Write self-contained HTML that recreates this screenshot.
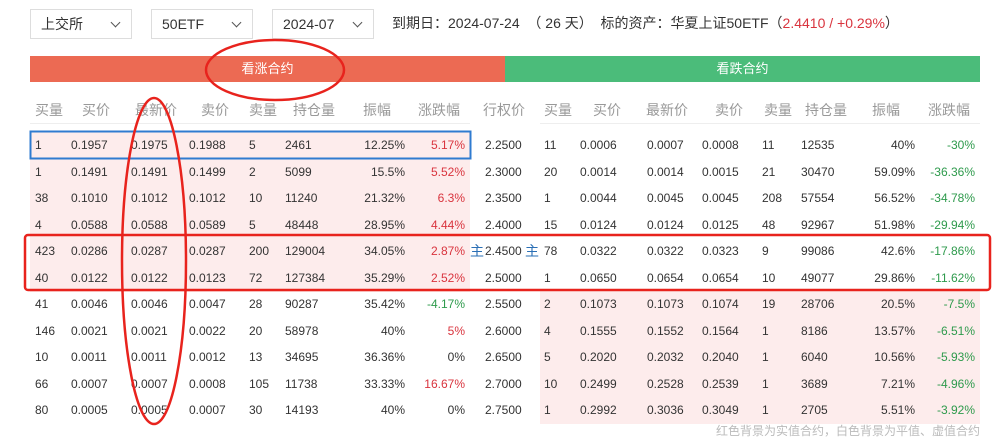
<!DOCTYPE html>
<html><head><meta charset="utf-8"><style>
*{margin:0;padding:0;box-sizing:border-box}
body{width:996px;height:443px;background:#fff;font-family:"Liberation Sans","Noto Sans CJK SC",sans-serif;font-size:12px;color:#333;position:relative;overflow:hidden}
.sel{position:absolute;top:9px;height:30px;border:1px solid #ddd;font-size:14px;line-height:28px;padding-left:10px;color:#333}
.sel:after{content:"";position:absolute;right:12px;top:9px;width:6px;height:6px;border-right:1px solid #555;border-bottom:1px solid #555;transform:rotate(45deg)}
.info{position:absolute;top:9px;left:392px;line-height:28px;font-size:14px;color:#333;white-space:nowrap}
.red{color:#d9343e}.grn{color:#2e9a4c}
.bar{position:absolute;top:56px;height:26px;color:#fff;font-size:13px;text-align:center;line-height:26px}
.hd{position:absolute;top:98px;height:24px;line-height:24px;color:#999;font-size:14px}
.r{position:absolute;left:0;width:996px;height:26px;line-height:26px}
.r span{position:absolute;top:0;white-space:nowrap}
.pl{position:absolute;left:30px;width:440px;top:0;height:27px;background:#fdecec}
.pr{position:absolute;left:540px;width:440px;top:0;height:27px;background:#fdecec}
.a{text-align:right}
</style></head><body>
<div class="sel" style="left:30px;width:102px">上交所</div>
<div class="sel" style="left:151px;width:102px">50ETF</div>
<div class="sel" style="left:272px;width:102px">2024-07</div>
<div class="info">到期日：2024-07-24 &nbsp;（ 26 天） &nbsp;标的资产：华夏上证50ETF（<span class="red">2.4410 / +0.29%</span>）</div>
<div class="bar" style="left:30px;width:475px;background:#ec6a53">看涨合约</div>
<div class="bar" style="left:505px;width:475px;background:#4bbc7a">看跌合约</div>
<div class="hd" style="left:35px">买量</div><div class="hd" style="left:82px">买价</div><div class="hd" style="left:135px">最新价</div><div class="hd" style="left:201px">卖价</div><div class="hd" style="left:249px">卖量</div><div class="hd" style="left:293px">持仓量</div><div class="hd" style="left:363px">振幅</div><div class="hd" style="left:418px">涨跌幅</div>
<div class="hd" style="left:483px">行权价</div><div class="hd" style="left:544px">买量</div><div class="hd" style="left:593px">买价</div><div class="hd" style="left:646px">最新价</div><div class="hd" style="left:715px">卖价</div><div class="hd" style="left:764px">卖量</div><div class="hd" style="left:805px">持仓量</div><div class="hd" style="left:872px">振幅</div><div class="hd" style="left:928px">涨跌幅</div>
<div style="position:absolute;left:30px;top:123px;width:440px;height:1px;background:#eee"></div>
<div style="position:absolute;left:540px;top:123px;width:440px;height:1px;background:#eee"></div>
<div id="rows"></div>
<script>
var d=[
[1,'0.1957','0.1975','0.1988',5,2461,'12.25%','5.17%','2.2500',11,'0.0006','0.0007','0.0008',11,12535,'40%','-30%'],
[1,'0.1491','0.1491','0.1499',2,5099,'15.5%','5.52%','2.3000',20,'0.0014','0.0014','0.0015',21,30470,'59.09%','-36.36%'],
[38,'0.1010','0.1012','0.1012',10,11240,'21.32%','6.3%','2.3500',1,'0.0044','0.0045','0.0045',208,57554,'56.52%','-34.78%'],
[4,'0.0588','0.0588','0.0589',5,48448,'28.95%','4.44%','2.4000',15,'0.0124','0.0124','0.0125',48,92967,'51.98%','-29.94%'],
[423,'0.0286','0.0287','0.0287',200,129004,'34.05%','2.87%','2.4500',78,'0.0322','0.0322','0.0323',9,99086,'42.6%','-17.86%'],
[40,'0.0122','0.0122','0.0123',72,127384,'35.29%','2.52%','2.5000',1,'0.0650','0.0654','0.0654',10,49077,'29.86%','-11.62%'],
[41,'0.0046','0.0046','0.0047',28,90287,'35.42%','-4.17%','2.5500',2,'0.1073','0.1073','0.1074',19,28706,'20.5%','-7.5%'],
[146,'0.0021','0.0021','0.0022',20,58978,'40%','5%','2.6000',4,'0.1555','0.1552','0.1564',1,8186,'13.57%','-6.51%'],
[10,'0.0011','0.0011','0.0012',13,34695,'36.36%','0%','2.6500',5,'0.2020','0.2032','0.2040',1,6040,'10.56%','-5.93%'],
[66,'0.0007','0.0007','0.0008',105,11738,'33.33%','16.67%','2.7000',10,'0.2499','0.2528','0.2539',1,3689,'7.21%','-4.96%'],
[80,'0.0005','0.0005','0.0007',30,14193,'40%','0%','2.7500',1,'0.2992','0.3036','0.3049',1,2705,'5.51%','-3.92%']];
var L=[35,71,131,189,249,285,null,null,485,544,580,647,702,762,801,null,null];
var h='';
d.forEach(function(r,i){
 var y=132+i*26.5;
 h+='<div class="r" style="top:'+y+'px">';
 if(i<6)h+='<div class="pl"></div>';
 if(i>=6)h+='<div class="pr"></div>';
 r.forEach(function(v,j){
  var cls='';
  if(j==7){cls=String(v).charAt(0)=='-'?'grn':(v=='0%'?'':'red');}
  if(j==16)cls='grn';
  if(L[j]!=null)h+='<span class="'+cls+'" style="left:'+L[j]+'px">'+v+'</span>';
  else{var R={6:405,7:465,15:915,16:975}[j];h+='<span class="a '+cls+'" style="left:'+(R-80)+'px;width:80px">'+v+'</span>';}
 });
 if(i==4){h+='<span style="left:470px;color:#2a6fb5;font-size:14px">主</span><span style="left:525px;color:#2a6fb5;font-size:14px">主</span>';}
 h+='</div>';
});
document.getElementById('rows').innerHTML=h;
</script>
<div style="position:absolute;right:16px;top:422px;font-size:12px;color:#bbb">红色背景为实值合约，白色背景为平值、虚值合约</div>
<svg style="position:absolute;left:0;top:0" width="996" height="443">
<rect x="30.5" y="131.5" width="440" height="27" fill="none" stroke="#2f7bd0" stroke-width="2"/>
<rect x="25" y="235" width="965" height="55" rx="3" fill="none" stroke="#e8231d" stroke-width="2.5"/>
<ellipse cx="275" cy="70" rx="69" ry="30" fill="none" stroke="#e8231d" stroke-width="2.5"/>
<ellipse cx="154" cy="261" rx="32" ry="163" fill="none" stroke="#e8231d" stroke-width="2.5"/>
</svg>
</body></html>
